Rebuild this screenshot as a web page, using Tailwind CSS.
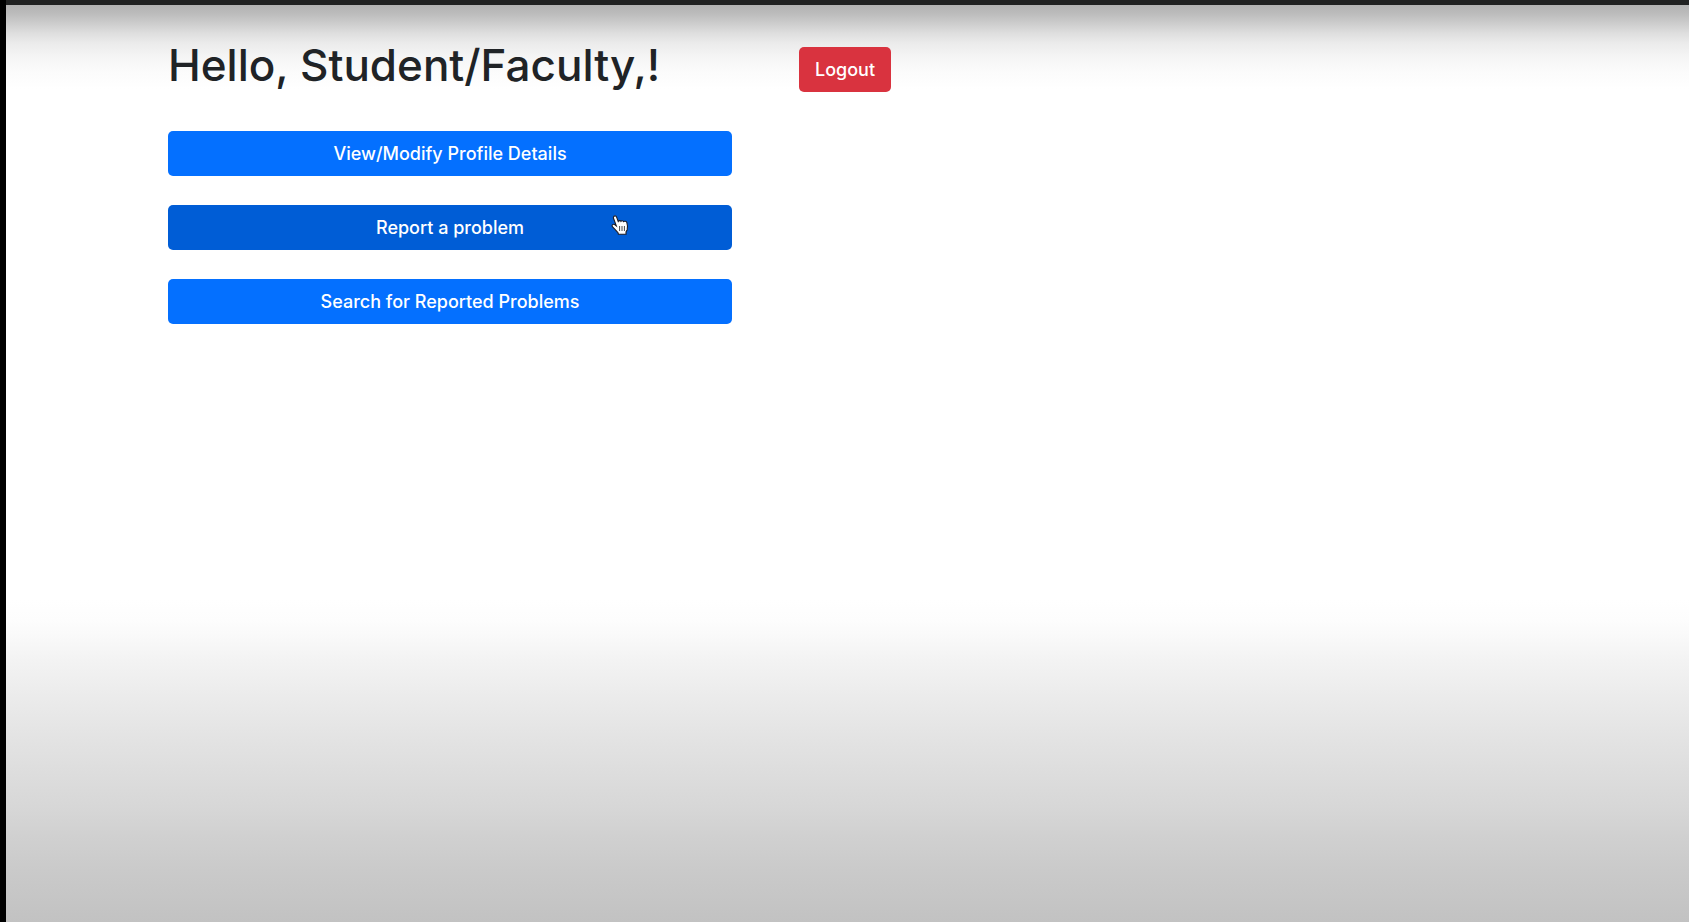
<!DOCTYPE html>
<html lang="en">
<head>
<meta charset="utf-8">
<meta name="viewport" content="width=device-width, initial-scale=1">
<title>Dashboard</title>
<script src="https://cdn.jsdelivr.net/npm/@tailwindcss/browser@4"></script>
</head>
<body class="flex min-h-screen flex-col border-l-6 border-black bg-white font-['Inter','Liberation_Sans',sans-serif] text-[#202326]">
  <div class="h-[5px] shrink-0 bg-[#212222]"></div>
  <main class="flex grow flex-col justify-between">
    <div class="bg-[linear-gradient(to_bottom,#b3b3b3_0px,#bbbbbb_8px,#cccccc_18px,#dedede_28px,#ebebeb_38px,#f5f5f5_52px,#fbfbfb_66px,#ffffff_84px)] pt-[32px] pl-[162px]">
      <div class="grid grid-cols-[minmax(0,564px)_auto] justify-start gap-x-[67px]">
        <h1 class="text-[44px] leading-[56px] font-medium whitespace-nowrap">Hello, Student/Faculty,!</h1>
        <div class="pt-[10px]">
          <button type="button" class="h-[45px] rounded-[5px] bg-[#d9333f] px-4 text-[18px] font-medium text-white">Logout</button>
        </div>
        <nav class="flex flex-col gap-[29px] pt-[38px]">
          <button type="button" class="h-[45px] rounded-[5px] bg-[#0470ff] text-[18px] font-medium text-white">View/Modify Profile Details</button>
          <button type="button" class="relative h-[45px] rounded-[5px] bg-[#005dd6] text-[18px] font-medium text-white">Report a problem
            <svg class="absolute top-[9px] right-[103px] h-[22px] w-[18px]" viewBox="0 0 18 22" aria-hidden="true">
              <path d="M3 2.2C4.2 1.4 5.2 2 5.6 3.1L7.2 7.4C7.8 6.4 9.6 6.3 10 7.3C10.6 6.4 12.3 6.5 12.6 7.6C13.4 6.9 15.4 7.1 15.8 8.4C16.6 11 16.8 13.5 16.2 15.7L15 18V20.2H7.4L7 18.7C5 16.9 3.2 14.4 1.2 12.4C.6 11 2.2 9.8 3.6 10.5L5.3 11.8L2.5 4.2C2.2 3.4 2.3 2.7 3 2.2Z" fill="#fff" stroke="#1a1a24" stroke-width="1.1"/>
              <path d="M8.6 12V17M11 12V17M13.4 12V17" fill="none" stroke="#333" stroke-width="0.9"/>
            </svg>
          </button>
          <button type="button" class="h-[45px] rounded-[5px] bg-[#0470ff] text-[18px] font-medium text-white">Search for Reported Problems</button>
        </nav>
      </div>
    </div>
    <div class="h-[322px] bg-[linear-gradient(to_bottom,#ffffff_0px,#fdfdfd_20px,#f9f9f9_37px,#f3f3f3_60px,#eaeaea_103px,#e3e3e3_140px,#dddddd_173px,#d7d7d7_207px,#d0d0d0_237px,#cacaca_270px,#c2c2c2_322px)]"></div>
  </main>
</body>
</html>
